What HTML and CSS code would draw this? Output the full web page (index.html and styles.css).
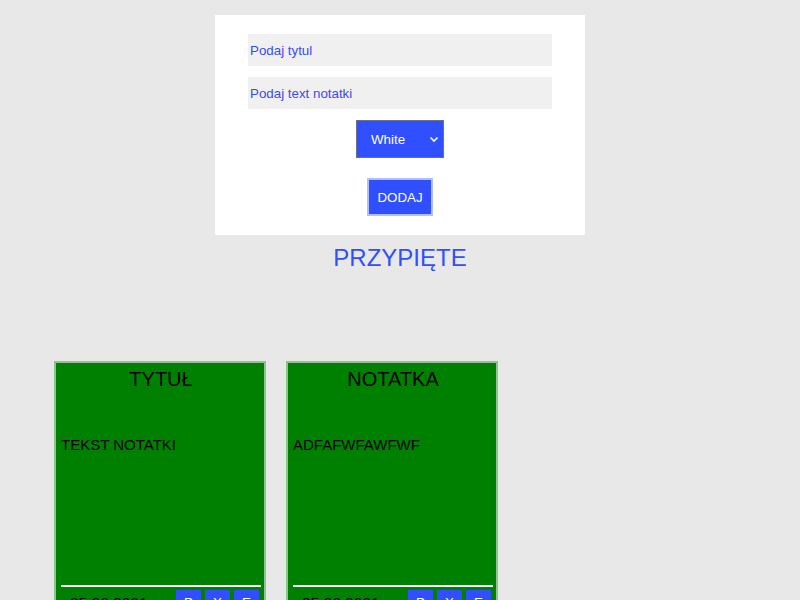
FILE: index.html
```html
<!DOCTYPE html>
<html lang="pl">
<head>
<meta charset="utf-8">
<title>Notatki</title>
<link rel="stylesheet" href="styles.css">
</head>
<body>
<form class="panel">
  <input class="field" type="text" placeholder="Podaj tytul">
  <input class="field" type="text" placeholder="Podaj text notatki">
  <div class="select-wrap">
    <select class="color-select">
      <option>White</option>
      <option>Green</option>
      <option>Red</option>
    </select>
    <svg class="chevron" width="10" height="7" viewBox="0 0 10 7"><path d="M1.5 1.5 L5 5 L8.5 1.5" fill="none" stroke="#fff" stroke-width="1.6"/></svg>
  </div>
  <button class="add-btn" type="button">DODAJ</button>
</form>
<h2 class="section-title">PRZYPIĘTE</h2>
<div class="notes">
  <div class="note">
    <div class="note-title">TYTUŁ</div>
    <div class="note-body">TEKST NOTATKI</div>
    <div class="note-line"></div>
    <div class="note-footer">
      <span class="note-date">25.06.2021</span>
      <div class="note-actions">
        <button class="act" type="button">P</button>
        <button class="act" type="button">X</button>
        <button class="act" type="button">E</button>
      </div>
    </div>
  </div>
  <div class="note">
    <div class="note-title">NOTATKA</div>
    <div class="note-body">ADFAFWFAWFWF</div>
    <div class="note-line"></div>
    <div class="note-footer">
      <span class="note-date">25.06.2021</span>
      <div class="note-actions">
        <button class="act" type="button">P</button>
        <button class="act" type="button">X</button>
        <button class="act" type="button">E</button>
      </div>
    </div>
  </div>
</div>
</body>
</html>
```
FILE: styles.css
```css
html, body {
  margin: 0;
  padding: 0;
}
body {
  background: #e8e8e8;
  font-family: "Liberation Sans", Arial, sans-serif;
  padding-top: 15px;
  overflow: hidden;
  height: 600px;
  box-sizing: border-box;
}
.panel {
  width: 370px;
  height: 220px;
  margin: 0 auto;
  background: #fff;
  box-sizing: border-box;
  padding: 19px 33px 0;
  display: flex;
  flex-direction: column;
  align-items: center;
}
.field {
  width: 304px;
  height: 32px;
  box-sizing: border-box;
  border: none;
  background: #f0f0f0;
  padding: 0 2px;
  font-family: "Liberation Sans", Arial, sans-serif;
  font-size: 13.33px;
  color: #304ffe;
  margin: 0 0 11px;
  outline: none;
}
.field::placeholder {
  color: #3a4cf2;
  opacity: 1;
}
.select-wrap {
  position: relative;
  width: 88px;
  height: 38px;
}
.color-select {
  appearance: none;
  -webkit-appearance: none;
  width: 88px;
  height: 38px;
  box-sizing: border-box;
  border: 1px solid #6b6f8f;
  background: #304ffe;
  color: #fff;
  font-family: "Liberation Sans", Arial, sans-serif;
  font-size: 13.33px;
  padding: 0 0 0 14px;
  outline: none;
}
.chevron {
  position: absolute;
  right: 5px;
  top: 16px;
  pointer-events: none;
}
.add-btn {
  margin-top: 20px;
  width: 66px;
  height: 38px;
  box-sizing: border-box;
  border: 2px solid #b3befc;
  background: #304ffe;
  color: #fff;
  font-family: "Liberation Sans", Arial, sans-serif;
  font-size: 13.33px;
  padding: 0;
}
.section-title {
  margin: 9px 0 0;
  text-align: center;
  font-weight: normal;
  font-size: 24px;
  color: #304ffe;
}
.notes {
  display: flex;
  gap: 20px;
  padding-left: 54px;
  margin-top: 89px;
}
.note {
  width: 212px;
  height: 280px;
  box-sizing: border-box;
  background: #008000;
  border: 2px solid #8fc38f;
  padding: 4px 3px 0 5px;
  flex: none;
}
.note-title {
  text-align: center;
  font-size: 20px;
  color: #000;
  height: 21px;
  line-height: 21px;
  padding-top: 2px;
}
.note-body {
  height: 195px;
  box-sizing: border-box;
  padding-top: 46px;
  font-size: 15px;
  color: #000;
}
.note-line {
  width: 200px;
  height: 2px;
  background: #fff;
}
.note-footer {
  display: flex;
  align-items: flex-start;
  margin-top: 3px;
}
.note-date {
  margin-left: 9px;
  margin-top: 4px;
  font-size: 15.5px;
  color: #000;
}
.note-actions {
  display: flex;
  gap: 4px;
  margin-left: auto;
  margin-right: 2px;
}
.act {
  width: 25px;
  height: 24px;
  border: none;
  background: #304ffe;
  color: #fff;
  font-family: "Liberation Sans", Arial, sans-serif;
  font-size: 13.33px;
  padding: 0;
}
```
